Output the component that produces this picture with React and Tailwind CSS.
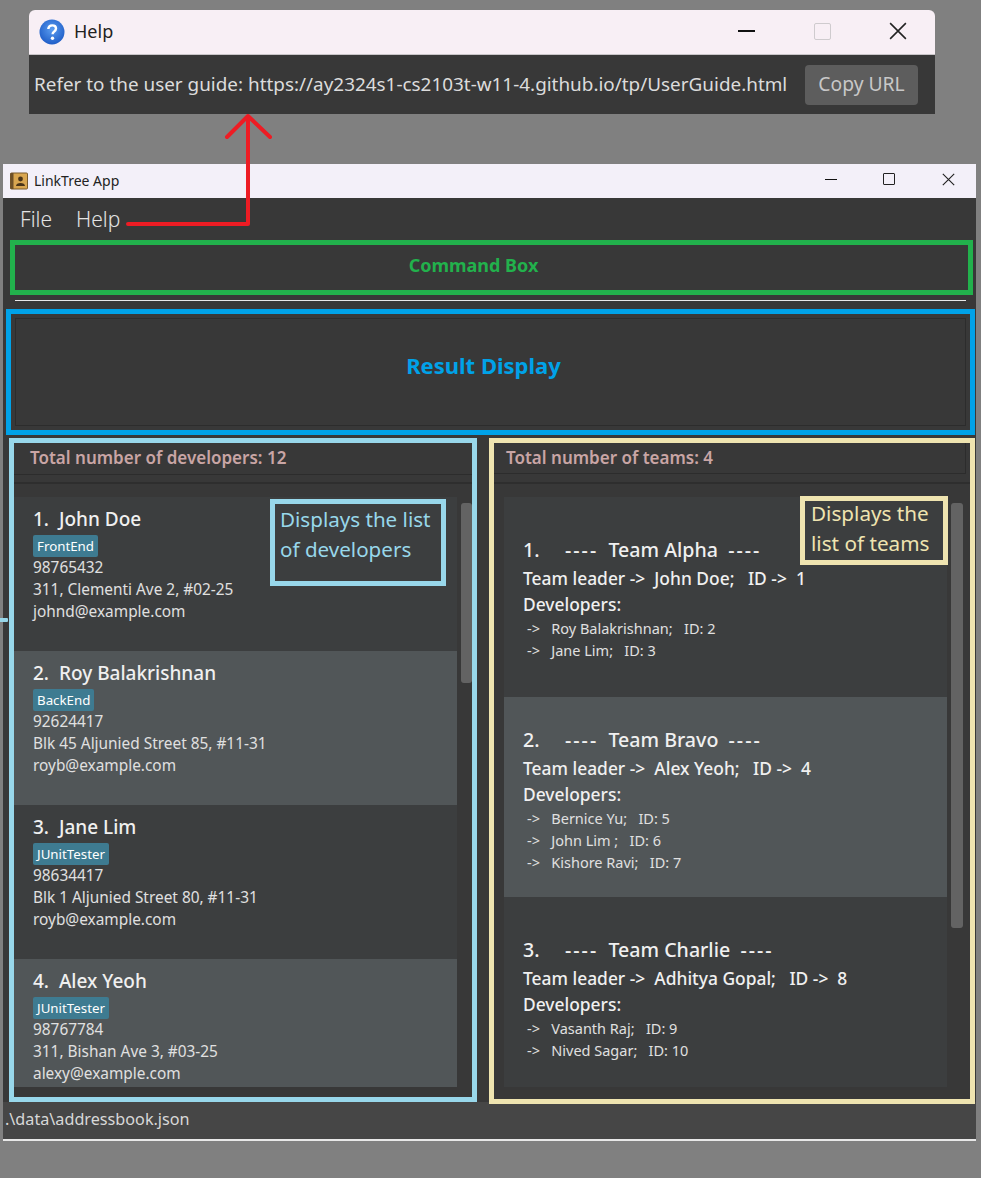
const developers = [
  { name: "1.  John Doe", tag: "FrontEnd", phone: "98765432", address: "311, Clementi Ave 2, #02-25", email: "johnd@example.com", h: "h-[154px]" },
  { name: "2.  Roy Balakrishnan", tag: "BackEnd", phone: "92624417", address: "Blk 45 Aljunied Street 85, #11-31", email: "royb@example.com", h: "h-[154px]" },
  { name: "3.  Jane Lim", tag: "JUnitTester", phone: "98634417", address: "Blk 1 Aljunied Street 80, #11-31", email: "royb@example.com", h: "h-[154px]" },
  { name: "4.  Alex Yeoh", tag: "JUnitTester", phone: "98767784", address: "311, Bishan Ave 3, #03-25", email: "alexy@example.com", h: "h-[128px]" },
];

const teams = [
  {
    num: "1.",
    name: "Team Alpha",
    leader: "Team leader ->  John Doe;   ID ->  1",
    members: ["->   Roy Balakrishnan;   ID: 2", "->   Jane Lim;   ID: 3"],
    h: "h-[200px]",
    pt: "pt-[37px]",
  },
  {
    num: "2.",
    name: "Team Bravo",
    leader: "Team leader ->  Alex Yeoh;   ID ->  4",
    members: ["->   Bernice Yu;   ID: 5", "->   John Lim ;   ID: 6", "->   Kishore Ravi;   ID: 7"],
    h: "h-[200px]",
    pt: "pt-[27px]",
  },
  {
    num: "3.",
    name: "Team Charlie",
    leader: "Team leader ->  Adhitya Gopal;   ID ->  8",
    members: ["->   Vasanth Raj;   ID: 9", "->   Nived Sagar;   ID: 10"],
    h: "h-[190px]",
    pt: "pt-[37px]",
  },
];

function DeveloperCard({ dev, index }) {
  return (
    <div className={`${dev.h} overflow-hidden pl-[19px] pt-[9px] ${index % 2 ? "bg-[#515658]" : "bg-[#3c3e3f]"}`}>
      <div className="h-[27px] text-[19px] leading-[27px] font-medium whitespace-pre text-[#f0f0f0]">{dev.name}</div>
      <div className="mt-[2px] w-fit h-[22px] rounded-[2px] bg-[#3e7b91] px-[4px] text-[13.3px] leading-[22px] text-white">{dev.tag}</div>
      <div className="text-[15.4px] leading-[22px] text-[#e0e0e0]">{dev.phone}</div>
      <div className="text-[15.4px] leading-[22px] text-[#e0e0e0]">{dev.address}</div>
      <div className="text-[15.4px] leading-[22px] text-[#e0e0e0]">{dev.email}</div>
    </div>
  );
}

function TeamCard({ team, index }) {
  return (
    <div className={`${team.h} ${team.pt} overflow-hidden pl-[19px] ${index % 2 ? "bg-[#515658]" : "bg-[#3c3e3f]"}`}>
      <div className="h-[31px] text-[19.6px] leading-[31px] font-medium whitespace-pre text-[#f0f0f0]">
        {team.num}{"     "}
        <span className="tracking-[2px]">----</span>{"  "}
        {team.name}{"  "}
        <span className="tracking-[2px]">----</span>
      </div>
      <div className="h-[27px] text-[17.4px] leading-[27px] font-medium whitespace-pre text-[#f0f0f0]">{team.leader}</div>
      <div className="h-[25px] text-[17.4px] leading-[25px] font-medium text-[#f0f0f0]">Developers:</div>
      {team.members.map((m) => (
        <div key={m} className="h-[22px] pl-[4px] text-[14.5px] leading-[22px] whitespace-pre text-[#e0e0e0]">{m}</div>
      ))}
    </div>
  );
}

function CloseIcon({ size, color }) {
  return (
    <svg width={size} height={size} viewBox="0 0 16 16" fill="none" stroke={color} strokeWidth="1.4">
      <path d="M1 1 15 15M15 1 1 15" />
    </svg>
  );
}

export default function App() {
  return (
    <div className="relative h-[1178px] w-[981px] overflow-hidden bg-[#808080] pt-[10px] font-['Noto_Sans',sans-serif]">
      {/* help window */}
      <div className="ml-[29px] w-[906px]">
        <div className="flex h-[45px] items-center rounded-t-[6px] border-b border-[#c9c5c8] bg-[#f8eff5] pl-[10px]">
          <svg width="26" height="26" viewBox="0 0 26 26">
            <defs>
              <radialGradient id="helpBlue" cx="50%" cy="40%" r="65%">
                <stop offset="0%" stopColor="#5b9df0" />
                <stop offset="100%" stopColor="#1a58c4" />
              </radialGradient>
            </defs>
            <circle cx="13" cy="13" r="12.5" fill="url(#helpBlue)" />
            <path d="M9.3 10c.2-2.4 1.8-3.6 3.9-3.6 2.2 0 3.8 1.3 3.8 3.2 0 1.5-.8 2.3-2 3.1-1 .7-1.4 1.2-1.4 2.5" fill="none" stroke="#fff" strokeWidth="2.4" />
            <circle cx="13.5" cy="19.3" r="1.7" fill="#fff" />
          </svg>
          <span className="mb-[2px] ml-[9px] text-[18px] text-[#222]">Help</span>
          <div className="mb-[2px] ml-auto flex items-center">
            <div className="h-[2px] w-[17px] bg-[#111]" />
            <div className="ml-[59px] h-[17px] w-[17px] rounded-[2px] border border-[#cfcbce]" />
            <div className="ml-[58px] mr-[28px]"><CloseIcon size={18} color="#222" /></div>
          </div>
        </div>
        <div className="flex h-[59px] items-center bg-[#383838] pl-[5px]">
          <span className="w-[771px] text-[18.9px] whitespace-nowrap text-[#dcdcdc]">Refer to the user guide: https://ay2324s1-cs2103t-w11-4.github.io/tp/UserGuide.html</span>
          <div className="flex h-[40px] w-[113px] items-center justify-center rounded-[4px] bg-[#5d5d5d] text-[19.3px] text-[#c8c8c8]">Copy URL</div>
        </div>
      </div>

      {/* main window */}
      <div className="ml-[3px] mt-[50px] h-[977px] w-[973px] bg-[#383838]">
        <div className="flex h-[34px] items-center bg-[#f3f0f9] pl-[7px]">
          <svg width="18" height="18" viewBox="0 0 18 18">
            <rect x="0.5" y="1" width="17" height="16" rx="1" fill="#d9a650" stroke="#7a5a2b" />
            <rect x="0.5" y="1" width="3" height="16" fill="#6e5028" />
            <circle cx="10.5" cy="7" r="2.4" fill="#4a3418" />
            <path d="M6 14c0-2 2-3 4.5-3s4.5 1 4.5 3z" fill="#4a3418" />
          </svg>
          <span className="mb-[2px] ml-[6px] text-[14px] text-[#222]">LinkTree App</span>
          <div className="mb-[4px] ml-auto flex items-center">
            <div className="h-px w-[12px] bg-[#111]" />
            <div className="ml-[46px] h-[12px] w-[12px] rounded-[1px] border-[1.5px] border-[#222]" />
            <div className="ml-[47px] mr-[21px]"><CloseIcon size={13} color="#222" /></div>
          </div>
        </div>
        <div className="flex h-[42px] items-center gap-[24px] pl-[17px] pt-[2px] text-[21px] font-light text-[#e4e4e4]">
          <span>File</span>
          <span>Help</span>
        </div>
        <div className="ml-[7px] flex h-[55px] w-[963px] items-center justify-center border-[5px] border-[#22b14c] pb-[4px] pr-[36px] text-[18px] font-bold text-[#22b14c]">Command Box</div>
        <div className="ml-[12px] mt-[5px] h-px w-[951px] bg-[#e8e8e8]" />
        <div className="ml-[3px] mt-[8px] h-[126px] w-[969px] border-[5px] border-[#00a2e8] p-[4px]">
          <div className="flex h-full items-center justify-center border border-[#2c2c2c] pb-[14px] pr-[14px] text-[22px] font-bold text-[#00a2e8]">Result Display</div>
        </div>

        <div className="mt-[3px] flex items-start">
          {/* developer list */}
          <div className="ml-[6px] h-[664px] w-[468px] border-[5px] border-[#98d7ea]">
            <div className="h-[32px] border-b border-[#2c2c2c] pl-[16px] text-[17px] leading-[30px] font-semibold text-[#c9a5a5]">Total number of developers: 12</div>
            <div className="mt-[7px] h-[2px] bg-[#2e2e2e]" />
            <div className="relative mt-[13px] flex">
              <div className="w-[443px]">
                {developers.map((dev, i) => (
                  <DeveloperCard key={dev.name} dev={dev} index={i} />
                ))}
              </div>
              <div className="ml-[4px] mt-[6px] h-[180px] w-[11px] rounded-[3px] bg-[#636363]" />
              <div className="absolute left-[256px] top-[2px] h-[87px] w-[176px] border-[5px] border-[#98d7ea] bg-[#3c3e3f] pl-[5px] text-[20.6px] leading-[30px] text-[#98d7ea]">
                Displays the list of developers
              </div>
            </div>
          </div>

          {/* team list */}
          <div className="ml-[12px] h-[666px] w-[486px] border-[5px] border-[#efe4b0]">
            <div className="mr-[4px] h-[31px] border-b border-r border-[#2c2c2c] pl-[12px] text-[17px] leading-[30px] font-semibold text-[#c9a5a5]">Total number of teams: 4</div>
            <div className="mt-[8px] h-[2px] bg-[#2e2e2e]" />
            <div className="relative ml-[10px] mt-[13px] flex">
              <div className="w-[443px]">
                {teams.map((team, i) => (
                  <TeamCard key={team.name} team={team} index={i} />
                ))}
              </div>
              <div className="ml-[4px] mt-[6px] h-[425px] w-[12px] rounded-[3px] bg-[#636363]" />
              <div className="absolute left-[296px] top-[-1px] h-[69px] w-[148px] border-[5px] border-[#efe4b0] bg-[#3c3e3f] pl-[6px] text-[20.7px] leading-[30px] text-[#efe4b0]">
                <div className="mt-[-3px]">Displays the list of teams</div>
              </div>
            </div>
          </div>
        </div>

        <div className="mt-[-2px] h-[39px] border-b-2 border-[#e8e8e8] bg-[#464646] pl-[2px] text-[16.2px] leading-[35px] text-[#d8d8d8]">.\data\addressbook.json</div>
      </div>

      {/* red arrow from the Help menu to the help window */}
      <svg className="absolute left-0 top-0" width="981" height="240" fill="none" stroke="#ed1c24" strokeWidth="4" strokeLinecap="round" strokeLinejoin="round">
        <path d="M128 224H248V116M227 137 248 116 270 137" />
      </svg>
      <div className="absolute left-0 top-[618px] h-[4px] w-[8px] rounded-r-[1px] bg-[#98d7ea]" />
    </div>
  );
}
